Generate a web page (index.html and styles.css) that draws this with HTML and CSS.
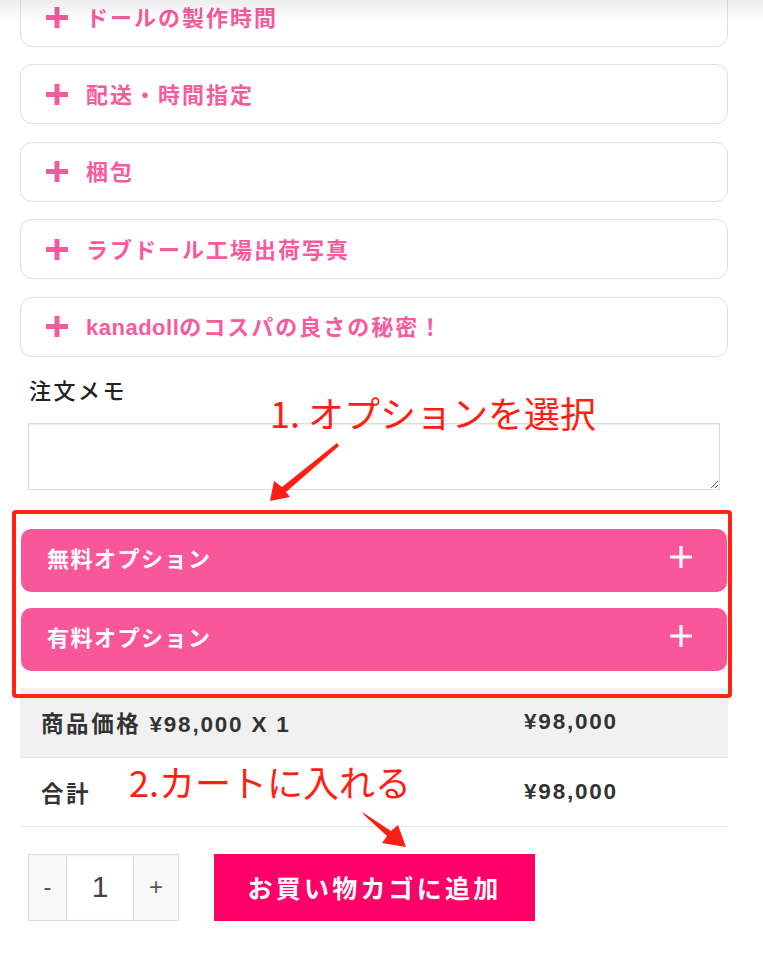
FILE: index.html
```html
<!DOCTYPE html>
<html lang="ja">
<head>
    <meta charset="UTF-8">
    <meta name="viewport" content="width=device-width, initial-scale=1.0">
    <title>商品オプション</title>
    <link rel="stylesheet" href="styles.css">
</head>
<body>
    <div class="page">
        <div class="product">

            <!-- よくある質問 -->
            <div class="faq">
                <div class="faq-item">
                    <svg class="faq-plus" viewBox="0 0 22 21"><path d="M11 0V21M0 10.5H22" /></svg>
                    <span class="faq-title">ドールの製作時間</span>
                </div>
                <div class="faq-item">
                    <svg class="faq-plus" viewBox="0 0 22 21"><path d="M11 0V21M0 10.5H22" /></svg>
                    <span class="faq-title">配送・時間指定</span>
                </div>
                <div class="faq-item">
                    <svg class="faq-plus" viewBox="0 0 22 21"><path d="M11 0V21M0 10.5H22" /></svg>
                    <span class="faq-title">梱包</span>
                </div>
                <div class="faq-item">
                    <svg class="faq-plus" viewBox="0 0 22 21"><path d="M11 0V21M0 10.5H22" /></svg>
                    <span class="faq-title">ラブドール工場出荷写真</span>
                </div>
                <div class="faq-item">
                    <svg class="faq-plus" viewBox="0 0 22 21"><path d="M11 0V21M0 10.5H22" /></svg>
                    <span class="faq-title"><span class="latin">kanadoll</span>のコスパの良さの秘密！</span>
                </div>
            </div>

            <!-- 注文メモ -->
            <div class="memo">
                <label class="memo-label" for="memo">注文メモ</label>
                <textarea class="memo-input" id="memo"></textarea>
            </div>

            <!-- オプション -->
            <div class="options">
                <div class="option-bar">
                    <span class="option-name">無料オプション</span>
                    <svg class="option-plus" viewBox="0 0 22 22"><path d="M11 0V22M0 11H22" /></svg>
                </div>
                <div class="option-bar">
                    <span class="option-name">有料オプション</span>
                    <svg class="option-plus" viewBox="0 0 22 22"><path d="M11 0V22M0 11H22" /></svg>
                </div>
            </div>

            <!-- 価格 -->
            <div class="price-table">
                <div class="price-row shaded">
                    <span><span class="ja">商品価格</span> ¥98,000 X 1</span>
                    <span>¥98,000</span>
                </div>
                <div class="price-row">
                    <span class="ja">合計</span>
                    <span>¥98,000</span>
                </div>
            </div>

            <div class="cart-row">
                <div class="qty">
                    <button class="qty-btn" type="button">-</button>
                    <input class="qty-input" type="text" value="1">
                    <button class="qty-btn" type="button">+</button>
                </div>
                <button class="add-cart" type="button">お買い物カゴに追加</button>
            </div>
        </div>

        <!-- 注釈 -->
        <div class="top-shade"></div>
        <div class="note-frame"></div>
        <div class="note note-1">1. オプションを選択</div>
        <div class="note note-2">2.カートに入れる</div>
        <svg class="note-arrows" viewBox="0 0 763 963">
            <polygon points="337,443 282,487 274,481 270,501 290,497 286,492 339,446" />
            <polygon points="362,812 391,831 398,825 406,847 382,843 387,836 364,815" />
        </svg>
    </div>
</body>
</html>
```

FILE: styles.css
```css
body {
    margin: 0;
    font-family: "Liberation Sans", "Noto Sans CJK JP", sans-serif;
    background: #fff;
    color: #333;
}
.page {
    position: relative;
    height: 963px;
    overflow: hidden;
}
.product {
    width: 708px;
    margin-left: 20px;
}

/* よくある質問 */
.faq {
    display: flex;
    flex-direction: column;
    gap: 17.4px;
    margin-top: -13px;
}
.faq-item {
    height: 60px;
    box-sizing: border-box;
    border: 1px solid #dfdfdf;
    border-radius: 12px;
    display: flex;
    align-items: center;
    gap: 18px;
    padding-left: 25px;
}
.faq-plus {
    width: 22px;
    height: 21px;
    stroke: #f65b9d;
    stroke-width: 5;
    fill: none;
}
.faq-title {
    font-size: 22px;
    font-weight: bold;
    letter-spacing: 2px;
    color: #f65b9d;
    padding-bottom: 3px;
}
.faq-title .latin {
    letter-spacing: 0.5px;
}

/* 注文メモ */
.memo {
    margin-top: 19px;
}
.memo-label {
    display: block;
    padding-left: 9px;
    font-size: 22px;
    line-height: 32px;
    letter-spacing: 2.5px;
    font-weight: 500;
    color: #222;
}
.memo-input {
    display: block;
    box-sizing: border-box;
    width: 692px;
    height: 67px;
    margin: 15px 0 0 8px;
    border: 1px solid #dcdcdc;
    box-shadow: inset 0 1px 2px rgba(0, 0, 0, 0.07);
    font-family: inherit;
}

/* オプション */
.options {
    display: flex;
    flex-direction: column;
    gap: 16px;
    margin: 39px 1px 0 1px;
}
.option-bar {
    height: 63px;
    border-radius: 10px;
    background: #fa579a;
    display: flex;
    align-items: center;
    justify-content: space-between;
    padding: 0 35px 0 26px;
    color: #fff;
    font-size: 22px;
    font-weight: bold;
    letter-spacing: 1.5px;
}
.option-name {
    padding-bottom: 6px;
}
.option-plus {
    width: 22px;
    height: 22px;
    margin-top: -7px;
    stroke: #fff;
    stroke-width: 3.2;
    fill: none;
}

/* 価格 */
.price-table {
    margin-top: 17px;
}
.price-row {
    display: grid;
    grid-template-columns: 483px 1fr;
    align-items: center;
    height: 68px;
    padding-left: 21px;
    font-size: 22.5px;
    font-weight: bold;
    letter-spacing: 1.8px;
    color: #333;
}
.price-row .ja {
    letter-spacing: 2.6px;
}
.price-row.shaded {
    height: 69px;
    background: #f1f1f1;
}
.price-row + .price-row {
    border-top: 1px solid #e6e6e6;
    border-bottom: 1px solid #e6e6e6;
}

/* カート */
.cart-row {
    display: flex;
    gap: 35px;
    margin: 27px 0 0 8px;
}
.qty {
    display: flex;
    height: 67px;
    border: 1px solid #dcdcdc;
    box-sizing: border-box;
}
.qty-btn {
    width: 37px;
    border: none;
    background: #f8f8f8;
    font-family: "Liberation Sans", sans-serif;
    font-size: 24px;
    color: #555;
    padding: 0;
}
.qty-btn:last-child {
    width: 44px;
}
.qty-input {
    width: 68px;
    box-sizing: border-box;
    border: none;
    border-left: 1px solid #dcdcdc;
    border-right: 1px solid #dcdcdc;
    box-shadow: inset 0 1px 3px rgba(0, 0, 0, 0.06);
    text-align: center;
    font-family: "Liberation Sans", sans-serif;
    font-size: 30px;
    color: #444;
    padding: 0;
}
.add-cart {
    width: 321px;
    height: 67px;
    border: none;
    background: #ff0068;
    color: #fff;
    font-family: "Liberation Sans", "Noto Sans CJK JP", sans-serif;
    font-size: 25px;
    font-weight: bold;
    letter-spacing: 3.2px;
    cursor: pointer;
}

/* 注釈 */
.top-shade {
    position: absolute;
    left: 0;
    top: 0;
    width: 100%;
    height: 22px;
    background: linear-gradient(rgba(0, 0, 0, 0.07), rgba(0, 0, 0, 0));
}
.note-frame {
    position: absolute;
    left: 12px;
    top: 510px;
    width: 720px;
    height: 188px;
    box-sizing: border-box;
    border: 4px solid #ff2314;
    border-radius: 4px;
}
.note {
    position: absolute;
    font-family: "Noto Sans CJK JP", sans-serif;
    font-size: 36px;
    line-height: 1;
    color: #ff1e14;
}
.note-1 {
    left: 270px;
    top: 394px;
}
.note-2 {
    left: 129px;
    top: 763px;
}
.note-arrows {
    position: absolute;
    left: 0;
    top: 0;
    width: 763px;
    height: 963px;
    fill: #ff1e14;
}
```
